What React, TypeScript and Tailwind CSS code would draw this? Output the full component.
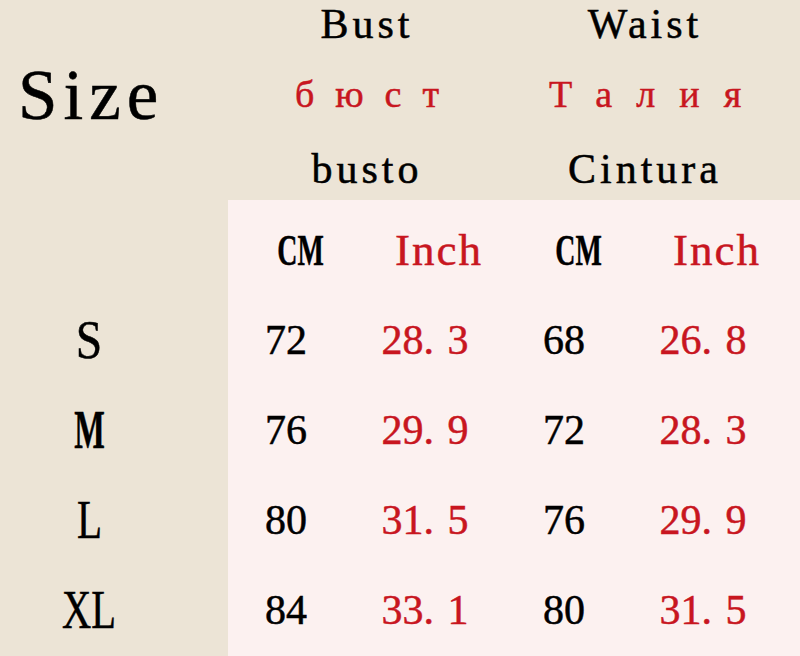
const rows = [
  { size: "S", fit: "scale-x-[0.88]", bustCm: "72", bustIn: ["28", "3"], waistCm: "68", waistIn: ["26", "8"] },
  { size: "M", fit: "scale-x-[0.6] font-bold", bustCm: "76", bustIn: ["29", "9"], waistCm: "72", waistIn: ["28", "3"] },
  { size: "L", fit: "scale-x-[0.76]", bustCm: "80", bustIn: ["31", "5"], waistCm: "76", waistIn: ["29", "9"] },
  { size: "XL", fit: "scale-x-[0.75]", bustCm: "84", bustIn: ["33", "1"], waistCm: "80", waistIn: ["31", "5"] },
]

function Inch({ parts }: { parts: string[] }) {
  return (
    <span className="text-[#c8161f]">
      {parts[0]}
      <span className="inline-block w-[24px] text-left">.</span>
      {parts[1]}
    </span>
  )
}

function HeadGroup({ en, ru, es, ruPad }: { en: string; ru: string; es: string; ruPad: string }) {
  return (
    <div className="w-[278px] pt-[3px] text-center">
      <div className="text-[42px] leading-[42px] tracking-[4px]">{en}</div>
      <div className={`mt-[30px] text-[38px] leading-[38px] text-[#c8161f] ${ruPad}`}>{ru}</div>
      <div className="mt-[35px] text-[42px] leading-[42px] tracking-[4px]">{es}</div>
    </div>
  )
}

export default function App() {
  return (
    <div className="w-[800px] h-[656px] overflow-hidden bg-[#ece4d6] text-black font-['Liberation_Serif',serif] [-webkit-text-stroke:0.5px_currentColor]">
      <div className="flex h-[200px]">
        <div className="w-[228px] pl-[18px] pt-[60px]">
          <div className="text-[71px] leading-[71px] tracking-[6px]">Size</div>
        </div>
        <HeadGroup en="Bust" ru="бюст" es="busto" ruPad="tracking-[21px] pl-[21px]" />
        <HeadGroup en="Waist" ru="Талия" es="Cintura" ruPad="tracking-[24px] pl-[24px]" />
      </div>

      <div className="flex">
        <div className="w-[228px] pt-[95px]">
          {rows.map((r) => (
            <div key={r.size} className="flex h-[90px] w-[178px] items-center justify-center">
              <span className={`inline-block text-[54px] leading-[54px] ${r.fit}`}>{r.size}</span>
            </div>
          ))}
        </div>

        <div className="flex-1 h-[456px] bg-[#fcf1f0] pt-[5px]">
          <div className="flex h-[90px] items-center text-[45px] leading-[45px]">
            <div className="w-[139px] pl-[5px] text-center">
              <span className="inline-block scale-x-[0.62] font-bold">CM</span>
            </div>
            <div className="w-[139px] pl-[5px] text-center tracking-[2px] text-[#c8161f]">Inch</div>
            <div className="w-[139px] pl-[5px] text-center">
              <span className="inline-block scale-x-[0.62] font-bold">CM</span>
            </div>
            <div className="w-[139px] pl-[5px] text-center tracking-[2px] text-[#c8161f]">Inch</div>
          </div>

          {rows.map((r) => (
            <div key={r.size} className="flex h-[90px] items-center text-[42px] leading-[42px]">
              <div className="w-[139px] pr-[23px] text-center">{r.bustCm}</div>
              <div className="w-[139px] pr-[23px] text-center">
                <Inch parts={r.bustIn} />
              </div>
              <div className="w-[139px] pr-[23px] text-center">{r.waistCm}</div>
              <div className="w-[139px] pr-[23px] text-center">
                <Inch parts={r.waistIn} />
              </div>
            </div>
          ))}
        </div>
      </div>
    </div>
  )
}
